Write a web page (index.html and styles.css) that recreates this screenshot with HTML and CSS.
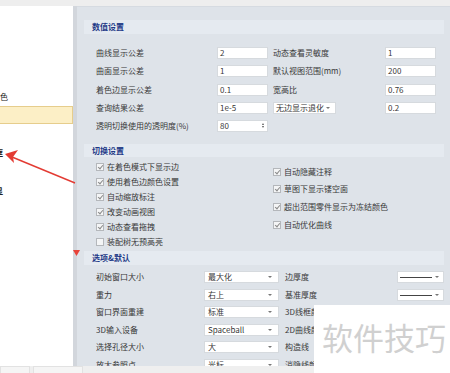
FILE: index.html
```html
<!DOCTYPE html>
<html lang="zh">
<head>
<meta charset="utf-8">
<link rel="stylesheet" href="styles.css">
</head>
<body>
<div class="topbar"></div>
<div class="main">
  <div class="left">
    <div class="lrow lr1"><span class="c1">着色</span></div>
    <div class="lsel"></div>
    <div class="lrow lr2"><span class="c2">框</span></div>
    <div class="lrow lr3"><span class="c2">显</span></div>
  </div>
  <div class="divider"></div>
  <div class="right">
    <div class="band">数值设置</div>
    <div class="grid1">
      <div class="lbl">曲线显示公差</div><div class="inp">2</div><div class="lbl l2">动态查看灵敏度</div><div class="inp">1</div>
      <div class="lbl">曲面显示公差</div><div class="inp">1</div><div class="lbl l2">默认视图范围(mm)</div><div class="inp">200</div>
      <div class="lbl">着色边显示公差</div><div class="inp">0.1</div><div class="lbl l2">宽高比</div><div class="inp">0.76</div>
      <div class="lbl">查询结果公差</div><div class="inp">1e-5</div><div class="l2"><div class="dd">无边显示退化<span class="caret"></span></div></div><div class="inp">0.2</div>
      <div class="lbl">透明切换使用的透明度(%)</div><div class="inp spin">80<span class="spinner"><i class="up"></i><i class="down"></i></span></div><div></div><div></div>
    </div>

    <div class="band b2">切换设置</div>
    <div class="checks">
      <div class="ccol cl">
        <div class="chk"><span class="box on"></span>在着色模式下显示边</div>
        <div class="chk"><span class="box on"></span>使用着色边颜色设置</div>
        <div class="chk"><span class="box on"></span>自动缩放标注</div>
        <div class="chk"><span class="box on"></span>改变动画视图</div>
        <div class="chk"><span class="box on"></span>动态查看拖拽</div>
        <div class="chk"><span class="box"></span>装配树无预高亮</div>
      </div>
      <div class="ccol cr">
        <div class="chk"><span class="box on"></span>自动隐藏注释</div>
        <div class="chk"><span class="box on"></span>草图下显示镂空面</div>
        <div class="chk"><span class="box on"></span>超出范围零件显示为冻结颜色</div>
        <div class="chk"><span class="box on"></span>自动优化曲线</div>
      </div>
    </div>

    <div class="band b3">选项&amp;默认</div>
    <div class="grid3">
      <div class="lbl">初始窗口大小</div><div class="sel">最大化<span class="caret"></span></div><div class="lbl l3">边厚度</div><div class="sel line"><span class="ln"></span><span class="caret"></span></div>
      <div class="lbl">重力</div><div class="sel">右上<span class="caret"></span></div><div class="lbl l3">基准厚度</div><div class="sel line"><span class="ln"></span><span class="caret"></span></div>
      <div class="lbl">窗口界面重建</div><div class="sel">标准<span class="caret"></span></div><div class="lbl l3 cut">3D线框颜色</div><div></div>
      <div class="lbl">3D输入设备</div><div class="sel">Spaceball<span class="caret"></span></div><div class="lbl l3 cut">2D曲线颜色</div><div></div>
      <div class="lbl">选择孔径大小</div><div class="sel">大<span class="caret"></span></div><div class="lbl l3 cut">构造线</div><div></div>
      <div class="lbl">放大参照点</div><div class="sel">光标<span class="caret"></span></div><div class="lbl l3 cut">消隐线颜色</div><div></div>
    </div>
  </div>
</div>
<div class="bottombar"><div class="tab t1"></div><div class="tab t2"></div></div>

<svg class="arrow" width="450" height="373" viewBox="0 0 450 373">
  <line x1="75" y1="183" x2="12" y2="157" stroke="#e33b33" stroke-width="1.4"/>
  <polygon points="5,154 18,150 13,157 14,163" fill="#e33b33"/>
</svg>
<svg class="tri" width="8" height="8" viewBox="0 0 8 8"><polygon points="0,0 7,0 3.5,6" fill="#e8433a"/></svg>
<div class="watermark">软件技巧</div>
</body>
</html>
```

FILE: styles.css
```css
* { box-sizing: border-box; margin: 0; padding: 0; }
html, body { width: 450px; height: 373px; overflow: hidden; }
body {
  font-family: "Noto Sans CJK SC", "Microsoft YaHei", sans-serif;
  font-size: 8px;
  color: #383838;
  background: #efefef;
  position: relative;
}
.topbar { height: 6px; background: #eeeeee; }
.main { display: flex; height: 360px; }
.left {
  width: 73px;
  background: #fff;
  overflow: hidden;
  display: flex;
  flex-direction: column;
}
.lrow { height: 10px; line-height: 10px; white-space: nowrap; color: #222; }
.lr1 { margin-top: 86px; }
.c1 { margin-left: -8px; }
.c2 { margin-left: -5px; font-weight: bold; }
.lsel {
  margin-top: 4px;
  height: 18px;
  background: #fcefc6;
  border: 1px solid #e6cd8c;
  border-left: none;
}
.lr2 { margin-top: 24px; }
.lr3 { margin-top: 28px; }
.divider { width: 4px; background: #d2d6dc; }
.right {
  flex: 1;
  background: #dee3e9;
  overflow: hidden;
  padding: 13px 6px 0 7px;
  border-top: 1px solid #d6dbe1;
}
.band {
  height: 14px;
  line-height: 14px;
  background: #e5eaf0;
  color: #1e3987;
  font-weight: bold;
  padding-left: 8px;
}
.grid1 {
  margin: 13px 0 0 12px;
  display: grid;
  grid-template-columns: 121px 51px 117px 51px;
  grid-auto-rows: 12px;
  row-gap: 6.25px;
  align-items: center;
}
.lbl { line-height: 12px; white-space: nowrap; overflow: hidden; }
.l2 { padding-left: 5px; }
.inp {
  height: 12px;
  background: #fff;
  border: 1px solid #d6dade;
  line-height: 10px;
  padding-left: 2px;
  color: #383838;
  position: relative;
}
.spinner {
  position: absolute;
  right: 3px;
  top: 2px;
  display: flex;
  flex-direction: column;
  gap: 1px;
}
.spinner i { display: block; width: 0; height: 0; border-left: 1.5px solid transparent; border-right: 1.5px solid transparent; }
.spinner .up { border-bottom: 2px solid #555; }
.spinner .down { border-top: 2px solid #555; }
.dd {
  width: 63px;
  height: 12px;
  background: #fff;
  border: 1px solid #d6dade;
  line-height: 10px;
  padding-left: 2px;
  position: relative;
  white-space: nowrap;
}
.caret {
  position: absolute;
  right: 5px;
  top: 4px;
  width: 0; height: 0;
  border-left: 2px solid transparent;
  border-right: 2px solid transparent;
  border-top: 2.5px solid #777;
}
.b2 { margin-top: 12px; height: 13px; line-height: 13px; }
.checks { display: flex; margin-left: 12px; }
.ccol { display: flex; flex-direction: column; }
.cl { width: 177px; padding-top: 4.7px; gap: 5.1px; }
.cr { padding-top: 9.7px; gap: 7.8px; }
.chk { height: 10px; line-height: 10px; display: flex; align-items: center; gap: 3px; white-space: nowrap; }
.box {
  width: 8px; height: 8px;
  border: 1px solid #b4b7bb;
  background: #f4f5f6;
  position: relative;
  flex: none;
}
.box.on::after {
  content: "";
  position: absolute;
  left: 2px; top: 0px;
  width: 2px; height: 4px;
  border-right: 1px solid #8a8a8a;
  border-bottom: 1px solid #8a8a8a;
  transform: rotate(40deg);
}
.b3 { margin-top: 3.8px; }
.grid3 {
  margin: 6px 0 0 12px;
  display: grid;
  grid-template-columns: 108px 75px 118px 47px;
  grid-auto-rows: 12px;
  row-gap: 5.6px;
  align-items: center;
}
.l3 { padding-left: 6px; }
.cut { width: 35px; }
.sel {
  height: 12px;
  background: #fff;
  border: 1px solid #d6dade;
  line-height: 10px;
  padding-left: 3px;
  position: relative;
  white-space: nowrap;
}
.sel .caret { right: 6px; }
.sel.line .caret { right: 4px; }
.ln {
  position: absolute;
  left: 2px; top: 5px;
  width: 32px; height: 0;
  border-top: 1px solid #444;
}
.bottombar { height: 7px; background: #efefef; display: flex; gap: 3px; }
.tab { height: 7px; border: 1px solid #e2e2e2; border-bottom: none; background: #f5f5f5; }
.t1 { width: 30px; }
.t2 { width: 50px; }
.arrow { position: absolute; left: 0; top: 0; pointer-events: none; }
.tri { position: absolute; left: 73px; top: 250px; }
.watermark {
  position: absolute;
  left: 314px;
  top: 305px;
  width: 136px;
  height: 68px;
  background: #fff;
  color: #d0d0d0;
  font-size: 31px;
  line-height: 31px;
  padding: 16px 0 0 8px;
  white-space: nowrap;
}
```
